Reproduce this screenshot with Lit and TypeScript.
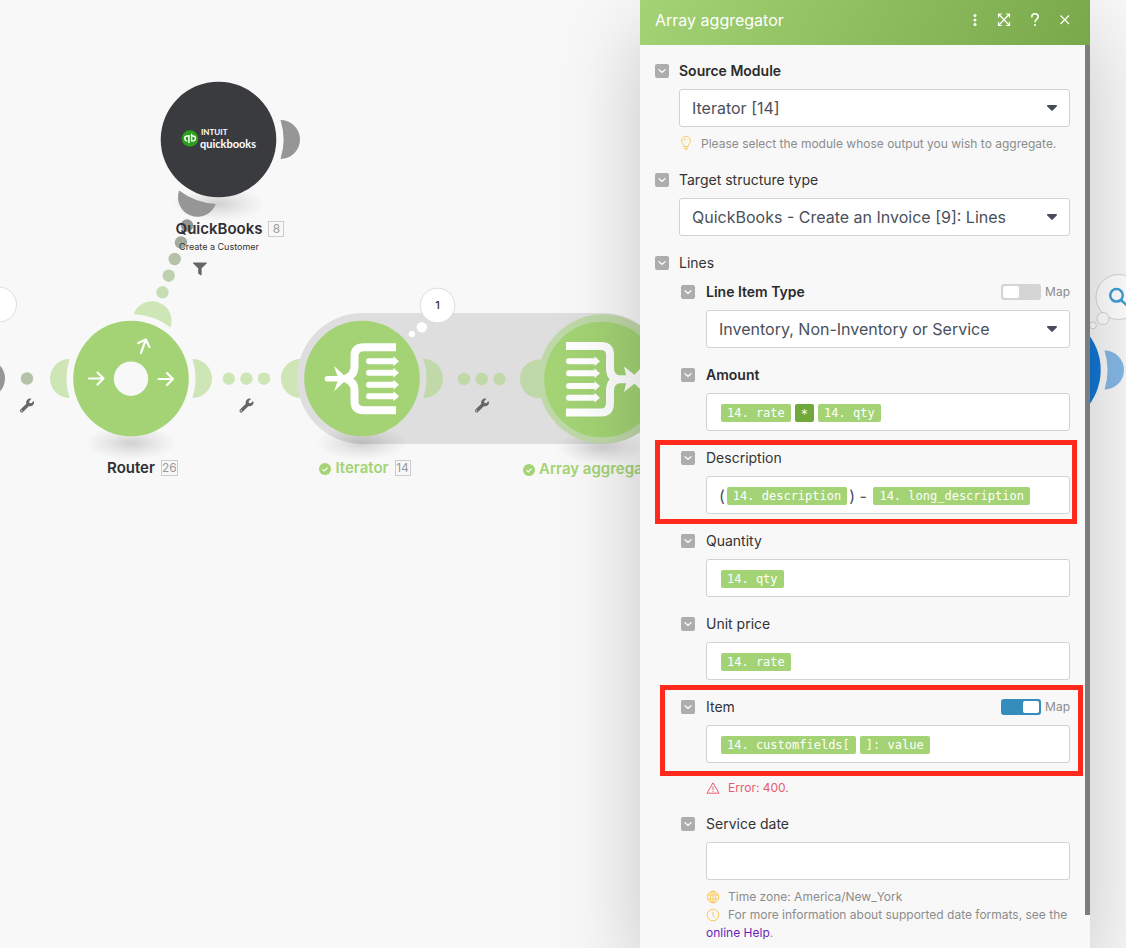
import { LitElement, html, svg, css, nothing } from "lit";
import { customElement, property } from "lit/decorators.js";

const EAR = "M61.5 -19.5A19.5 19.5 0 0 1 61.5 19.5A64.5 64.5 0 0 0 61.5 -19.5Z";
const WRENCH =
  "M507.73 109.1c-2.24-9.03-13.54-12.09-20.12-5.51l-74.36 74.36-67.88-11.31-11.31-67.88 74.36-74.36c6.62-6.62 3.43-17.9-5.66-20.16-47.38-11.74-99.55.91-136.58 37.93-39.64 39.64-50.55 97.1-34.05 147.2L18.74 402.76c-24.99 24.99-24.99 65.51 0 90.5 24.99 24.99 65.51 24.99 90.5 0l213.21-213.21c50.12 16.71 107.47 5.68 147.37-34.22 37.07-37.07 49.7-89.32 37.91-136.73zM64 472c-13.25 0-24-10.75-24-24 0-13.26 10.75-24 24-24s24 10.74 24 24c0 13.25-10.75 24-24 24z";
const FILTER =
  "M487.976 0H24.028C2.71 0-8.047 25.866 7.058 40.971L192 225.941V432c0 7.831 3.821 15.17 10.237 19.662l80 55.98C298.02 518.69 320 507.493 320 487.98V225.941l184.947-184.97C520.021 25.896 509.338 0 487.976 0z";

const ear = (x: number, y: number, angle: number, cls: string) =>
  svg`<path class=${cls} d=${EAR} transform="translate(${x} ${y}) rotate(${angle})"/>`;
const wrench = (x: number, y: number) =>
  svg`<path class="tool" d=${WRENCH} transform="translate(${x} ${y}) scale(.0273)"/>`;
const dots = (xs: number[], y: number) =>
  xs.map((x) => svg`<circle class="soft" cx=${x} cy=${y} r="6.2"/>`);
const slimArrow = (x: number, y: number, angle: number) =>
  svg`<path class="arrow" d="M-7.5 0H7M1 -6L7 0L1 6" transform="translate(${x} ${y}) rotate(${angle})"/>`;

interface NodeLabel {
  x: number;
  y: number;
  title: string;
  id: string;
  subtitle?: string;
  done?: boolean;
}

const LABELS: NodeLabel[] = [
  { x: 219, y: 219, title: "QuickBooks", id: "8", subtitle: "Create a Customer" },
  { x: 131, y: 458, title: "Router", id: "26" },
  { x: 362, y: 458, title: "Iterator", id: "14", done: true },
  { x: 601, y: 459, title: "Array aggregator", id: "15", done: true },
];

@customElement("scenario-canvas")
class ScenarioCanvas extends LitElement {
  static styles = css`
    :host { display: block; position: relative; overflow: hidden; background: #f8f8f8; }
    .drawing { display: block; width: 100%; height: 100%; }
    .green { fill: #a3d374; }
    .soft { fill: #a3d374; opacity: .5; }
    .ring { fill: #bfd8a8; }
    .gray { fill: #969696; }
    .blue { fill: #1277d3; }
    .softblue { fill: #1277d3; opacity: .5; }
    .tool { fill: #666; }
    .arrow { fill: none; stroke: #fff; stroke-width: 2.2; stroke-linecap: round; stroke-linejoin: round; }
    .white { fill: #fff; }
    .brace { fill: none; stroke: #fff; stroke-width: 8; }
    .bubble { fill: #fff; stroke: #ddd; }
    .count { font: 500 11px Inter, sans-serif; fill: #333; text-anchor: middle; }
    .intuit { font: 700 8px Lato, sans-serif; fill: #fff; }
    .brand { font: 700 11px Lato, sans-serif; fill: #fff; }
    .label { position: absolute; width: 300px; display: grid; grid-template-columns: 1fr auto 1fr; column-gap: 6px; align-items: center; font-family: Inter, sans-serif; }
    .title { grid-column: 2; font-size: 15px; line-height: 20px; font-weight: 600; color: #2f2f33; }
    .done { column-gap: 4px; }
    .done .title { color: #a3d374; }
    .check { justify-self: end; width: 12px; height: 12px; margin-top: 2px; }
    .id { grid-column: 3; justify-self: start; box-sizing: border-box; min-width: 16px; height: 16px; border: 1px solid #ccc; font-size: 12px; line-height: 14px; text-align: center; color: #999; }
    .done .id { margin-left: 2px; }
    .subtitle { grid-column: 1 / 4; text-align: center; font-size: 9px; line-height: 16px; color: #333; }
  `;

  render() {
    return html`
      <svg class="drawing" aria-hidden="true">
        <defs>
          <radialGradient id="ground"><stop offset="0" stop-color="#000" stop-opacity=".16"/><stop offset=".5" stop-color="#000" stop-opacity=".07"/><stop offset="1" stop-color="#000" stop-opacity="0"/></radialGradient>
        </defs>
        ${svg`
        <ellipse cx="218" cy="204" rx="46" ry="17" fill="url(#ground)"/>
        <ellipse cx="131" cy="443" rx="46" ry="17" fill="url(#ground)"/>

        <circle class="gray" cx="-14.5" cy="378.5" r="19.5"/>
        <circle class="bubble" cx="-1" cy="304.5" r="17.5"/>
        <circle cx="27" cy="378.5" r="6.2" fill="#b4c2a9"/>
        ${wrench(20, 398.5)}

        ${ear(219, 139.5, 0, "gray")}
        ${ear(218.5, 139.5, 110, "gray")}
        <circle cx="218.5" cy="139.5" r="57.8" fill="#3a3b3f"/>
        <circle cx="190" cy="138.5" r="8.3" fill="#2ca01c"/>
        <g fill="none" stroke="#fff" stroke-width="1.4">
          <path d="M189 142.2V136H187.2A2.3 2.3 0 0 0 187.2 140.9M188.9 135V143"/>
          <path d="M191.6 133.8V140.9H193A2.4 2.4 0 0 0 193 136H192.4"/>
        </g>
        <text class="intuit" x="201" y="135">INTUIT</text>
        <text class="brand" x="200" y="148">quickbooks</text>
        <circle cx="187" cy="225.5" r="6.2" fill="#929591"/>
        <circle cx="181" cy="242.5" r="6.2" fill="#a1aa9b"/>
        <circle cx="174.7" cy="259" r="6.2" fill="#b3c2a8"/>
        <circle cx="168.7" cy="275.7" r="6.2" fill="#bed0ae"/>
        <circle cx="162.5" cy="292.3" r="6.2" fill="#c7ddb4"/>
        <path class="tool" d=${FILTER} transform="translate(193 262.5) scale(.027 .025)"/>

        ${ear(131, 378.5, 180, "soft")}
        ${ear(131, 378.5, 0, "soft")}
        ${ear(131, 378.5, -70, "soft")}
        <circle class="green" cx="131" cy="378.5" r="57.8"/>
        <circle cx="131" cy="378.7" r="17.2" fill="#f8f8f8"/>
        ${slimArrow(96.5, 378.5, 0)}
        ${slimArrow(166, 379, 0)}
        ${slimArrow(143.5, 346, -70)}
        ${dots([228.8, 246.4, 264], 378.7)}
        ${wrench(239.5, 398.5)}

        ${ear(362, 378.5, 180, "soft")}
        <rect x="297" y="313" width="371" height="131" rx="65.5" fill="#dedede"/>
        <ellipse cx="362" cy="443" rx="46" ry="17" fill="url(#ground)"/>
        ${ear(362, 378.5, 0, "soft")}
        <circle class="green" cx="362" cy="378.5" r="57.8"/>
        <path class="brace" d="M396 347.3H364Q354.5 347.3 354.5 356V367Q354.5 375 346 378.5Q354.5 382 354.5 390V401.5Q354.5 410.3 364 410.3H396"/>
        <path class="white" d="M327.5 375.9H337.5L334 366L347.5 378.5L334 391.5L337.5 381.6H327.5A2.8 2.8 0 0 1 327.5 375.9Z"/>
        ${[361.3, 372.8, 384.7, 396.2].map(
          (y) => svg`<path class="white" transform="translate(366 ${y})" d="M3 -3H27.5V-5L33 0L27.5 5V3H3A3 3 0 0 1 3 -3Z"/>`,
        )}
        <circle class="bubble" cx="437.5" cy="305.5" r="17.3"/>
        <circle class="white" cx="421.8" cy="327.3" r="5.3"/>
        <circle class="white" cx="411.8" cy="334" r="3.2"/>
        <text class="count" x="437.5" y="309">1</text>

        ${dots([464, 481.7, 499.5], 379)}
        ${wrench(475, 398.5)}
        <ellipse cx="602" cy="447" rx="46" ry="17" fill="url(#ground)"/>
        <circle class="ring" cx="539.5" cy="379" r="19.5"/>
        <circle class="ring" cx="603" cy="379" r="64.7"/>
        <circle class="green" cx="602" cy="379.5" r="57.8"/>
        <path class="brace" d="M566 346H601Q610 346 610 355V368Q610 379 620 379.3H628M566 412.5H601Q610 412.5 610 403V391Q610 379.8 620 379.3"/>
        <path class="white" d="M624 366.5L640 379.3L624 392L627 379.3Z"/>
        <path class="white" d="M630 379.3L642 367V391Z"/>
        ${[361.3, 373.3, 386, 397.8].map(
          (y) => svg`<path class="white" transform="translate(566 ${y})" d="M3 -3H28.5V-5L34 0L28.5 5V3H3A3 3 0 0 1 3 -3Z"/>`,
        )}

        ${ear(1043, 370, 0, "softblue")}
        <circle class="blue" cx="1042.7" cy="370" r="58"/>
        <circle cx="1118.5" cy="297" r="22.5" fill="#fff" stroke="#d4d4d4"/>
        <circle cx="1103" cy="318.5" r="6" fill="#fff" stroke="#d4d4d4"/>
        <circle cx="1093" cy="325.3" r="3.4" fill="#fff" stroke="#d4d4d4"/>
        <g fill="none" stroke="#3f9fd6" stroke-width="2.5"><circle cx="1116.5" cy="295.3" r="6.3"/><path d="M1121 300L1128 306.5"/></g>
        `}
      </svg>
      ${LABELS.map(
        (n) => html`
          <div class="label ${n.done ? "done" : ""}" style="left:${n.x - 150}px;top:${n.y}px">
            ${n.done
              ? html`<svg class="check" viewBox="0 0 12 12" aria-hidden="true"><circle class="green" cx="6" cy="6" r="6" /><path d="M3.5 6.2L5.3 8L8.6 4.6" fill="none" stroke="#fff" stroke-width="1.2" /></svg>`
              : nothing}
            <span class="title">${n.title}</span>
            <span class="id">${n.id}</span>
            ${n.subtitle ? html`<span class="subtitle">${n.subtitle}</span>` : nothing}
          </div>
        `,
      )}
    `;
  }
}

interface Field {
  key: string;
  label: string;
  kind: "select" | "editor" | "date";
  required?: boolean;
  value?: string;
  parts?: { text: string; type: "text" | "chip" | "op" }[];
  map?: "on" | "off";
  mark?: string;
  error?: string;
  tip?: string;
}

const TOP_FIELDS: Field[] = [
  { key: "source", label: "Source Module", kind: "select", required: true, value: "Iterator [14]", tip: "Please select the module whose output you wish to aggregate." },
  { key: "target", label: "Target structure type", kind: "select", value: "QuickBooks - Create an Invoice [9]: Lines" },
];

const LINE_FIELDS: Field[] = [
  { key: "type", label: "Line Item Type", kind: "select", required: true, value: "Inventory, Non-Inventory or Service", map: "off" },
  { key: "amount", label: "Amount", kind: "editor", required: true, parts: [{ text: "14. rate", type: "chip" }, { text: "*", type: "op" }, { text: "14. qty", type: "chip" }] },
  { key: "description", label: "Description", kind: "editor", mark: "mark-a", parts: [{ text: "(", type: "text" }, { text: "14. description", type: "chip" }, { text: ") - ", type: "text" }, { text: "14. long_description", type: "chip" }] },
  { key: "quantity", label: "Quantity", kind: "editor", parts: [{ text: "14. qty", type: "chip" }] },
  { key: "price", label: "Unit price", kind: "editor", parts: [{ text: "14. rate", type: "chip" }] },
  { key: "item", label: "Item", kind: "editor", map: "on", mark: "mark-b", parts: [{ text: "14. customfields[", type: "chip" }, { text: "]: value", type: "chip" }], error: "Error: 400." },
  { key: "date", label: "Service date", kind: "date" },
];

@customElement("module-field")
class ModuleField extends LitElement {
  @property({ attribute: false }) field!: Field;

  static styles = css`
    :host { display: block; font-family: Inter, sans-serif; }
    .group { position: relative; display: grid; grid-template-columns: 14px minmax(0, 1fr); column-gap: var(--field-gap, 10px); row-gap: 8px; }
    .toggle { align-self: center; width: 14px; height: 14px; padding: 0; border: 0; border-radius: 2px; background: #adadad; display: grid; place-items: center; }
    .toggle svg { width: 14px; height: 14px; }
    .head { display: flex; justify-content: space-between; align-items: center; height: 20px; }
    .name { font-size: 14px; line-height: 20px; color: #333; }
    .required { font-weight: 600; color: #2b2b2b; }
    .map { display: flex; align-items: center; gap: 4px; font-size: 12px; line-height: 20px; color: #8c8c8c; }
    .switch { appearance: none; box-sizing: border-box; width: 40px; height: 16px; margin: 0; padding: 2px; border-radius: 3px; background: #d5d5d5; display: flex; }
    .switch::before { content: ""; width: 16px; height: 12px; border-radius: 2px; background: #fff; }
    .switch:checked { background: #348dbb; justify-content: flex-end; }
    .box { grid-column: 2; box-sizing: border-box; width: 100%; min-height: 38px; margin: 0; border: 1px solid #d2d2d2; border-radius: 3px; background: #fff; padding: 0 12px; font: 16px/24px Inter, sans-serif; color: #4a505b; }
    .picker { grid-column: 2; display: grid; align-items: center; }
    .picker > * { grid-area: 1 / 1; }
    .picker .box { appearance: none; height: 38px; padding-right: 36px; }
    .caret { justify-self: end; width: 12px; height: 8px; margin-right: 12px; pointer-events: none; }
    .editor { display: flex; align-items: center; flex-wrap: wrap; white-space: pre; outline: none; padding-top: 2px; }
    .chip, .op { margin: 0 2px; padding: 0 6px; border-radius: 2px; background: #a3d374; color: #fff; font: 12px/18px "DejaVu Sans Mono", monospace; }
    .op { padding-top: 3px; line-height: 15px; background: #71a83c; }
    .mark { position: absolute; border: 5px solid #ff2a1c; pointer-events: none; }
    .mark-a { inset: -8px -7px -10px -26px; }
    .mark-b { inset: -12px -13px -13px -21px; }
    .note { display: flex; align-items: center; margin: 8px 0 0 calc(14px + var(--field-gap, 10px)); font-size: 12px; line-height: 18px; color: #8c8c8c; gap: 8px; }
    .note svg { flex: none; width: 14px; height: 16px; }
    .error { margin-top: 16px; color: #e65c6f; }
  `;

  private control(f: Field) {
    if (f.kind === "select")
      return html`<div class="picker">
        <select class="box" id="control"><option>${f.value}</option></select>
        <svg class="caret" viewBox="0 0 12 8" aria-hidden="true"><path d="M1.8 1H10.2C11 1 11.3 1.9 10.7 2.5L6.7 6.5Q6 7.1 5.3 6.5L1.3 2.5C.7 1.9 1 1 1.8 1Z" fill="#464d58" /></svg>
      </div>`;
    if (f.kind === "date") return html`<input class="box" id="control" type="text" />`;
    return html`<div class="box editor" id="control" role="textbox" tabindex="0" aria-labelledby="name">${f.parts!.map((p) =>
      p.type === "text" ? html`<span>${p.text}</span>` : html`<span class=${p.type}>${p.text}</span>`)}</div>`;
  }

  render() {
    const f = this.field;
    return html`
      <div class="group">
        <button class="toggle" type="button" aria-label="Collapse ${f.label}">
          <svg viewBox="0 0 14 14" aria-hidden="true"><path d="M4 5.8L7 8.4L10 5.8" fill="none" stroke="#fff" stroke-width="1.3" stroke-linecap="round" /></svg>
        </button>
        <div class="head">
          <label id="name" class="name ${f.required ? "required" : ""}" for="control">${f.label}</label>
          ${f.map ? html`<label class="map"><input class="switch" type="checkbox" ?checked=${f.map === "on"} />Map</label>` : nothing}
        </div>
        ${this.control(f)}
        ${f.mark ? html`<div class="mark ${f.mark}"></div>` : nothing}
      </div>
      ${f.tip
        ? html`<div class="note"><svg viewBox="0 0 14 16" aria-hidden="true" fill="none" stroke="#fbc95c"><path d="M5 10.5C5 8 2.5 7.300 2.5 4.800A4.500 4.500 0 0 1 11.500 4.800C11.500 7.300 9 8 9 10.500ZM5 12.200H9M6 13.700H8M5 4.800A2 2 0 0 1 7 2.800" /></svg><span>${f.tip}</span></div>`
        : nothing}
      ${f.error
        ? html`<div class="note error"><svg viewBox="0 0 14 16" aria-hidden="true" fill="none" stroke="currentColor" stroke-linejoin="round"><path d="M7 2.800L13 13.200H1ZM7 6.500V10M7 11V12" /></svg><span>${f.error}</span></div>`
        : nothing}
    `;
  }
}

@customElement("app-root")
class AppRoot extends LitElement {
  static styles = css`
    :host { display: grid; grid-template: minmax(0, 1fr) / minmax(0, 1fr); height: 100vh; overflow: hidden; font-family: Inter, sans-serif; }
    .canvas, .panel { grid-area: 1 / 1; }
    .panel { z-index: 1; justify-self: end; box-sizing: border-box; width: min(450px, 100%); margin-right: 36px; display: flex; flex-direction: column; background: #f8f8f8; box-shadow: 0 30px 80px rgba(0, 0, 0, .2); }
    .bar { flex: none; display: flex; align-items: center; justify-content: space-between; height: 45px; padding: 0 16px 6px 15px; box-sizing: border-box; background: linear-gradient(120deg, #a3d374, #78a849); }
    .heading { margin: 0; font-size: 16px; line-height: 24px; font-weight: 400; color: #fff; }
    .actions { display: flex; gap: 12px; }
    .action { width: 18px; height: 18px; padding: 0; border: 0; background: none; color: #fff; }
    .action svg { display: block; width: 18px; height: 18px; fill: none; stroke: currentColor; stroke-width: 1.2; }
    .main { flex: 1; min-height: 0; display: flex; }
    .form { flex: 1; min-width: 0; overflow-y: auto; scrollbar-width: none; box-sizing: border-box; padding: 16px 15px 6px; display: flex; flex-direction: column; gap: 17px; }
    .rail { width: 5px; }
    .thumb { height: 96.3%; background: #7d7d7d; }
    .section { display: flex; align-items: center; gap: 10px; height: 20px; margin: 0; font-size: 14px; line-height: 20px; font-weight: 400; color: #333; }
    .toggle { width: 14px; height: 14px; padding: 0; border: 0; border-radius: 2px; background: #adadad; }
    .toggle svg { display: block; width: 14px; height: 14px; }
    .lines { --field-gap: 11px; display: flex; flex-direction: column; gap: 17px; margin: -8px 0 0 26px; }
    .info { margin: -9px 0 0 51px; font-size: 12px; line-height: 18px; color: #8c8c8c; }
    .line { display: block; }
    .line svg { width: 14px; height: 14px; margin-right: 8px; vertical-align: -3px; fill: none; stroke: #fbc95c; }
    .help { color: #6a1fb8; text-decoration: none; }
  `;

  render() {
    return html`
      <scenario-canvas class="canvas"></scenario-canvas>
      <section class="panel">
        <header class="bar">
          <h1 class="heading">Array aggregator</h1>
          <div class="actions">
            <button class="action" aria-label="More"><svg viewBox="0 0 18 18"><g fill="currentColor" stroke="none"><circle cx="9" cy="4.5" r="1.5" /><circle cx="9" cy="9" r="1.5" /><circle cx="9" cy="13.5" r="1.5" /></g></svg></button>
            <button class="action" aria-label="Expand"><svg viewBox="0 0 18 18"><path d="M2.5 6.500V3H6M10 3H13.500V6.500M13.500 11V14.500H10M6 14.500H2.500V11M2.500 3L13.500 14.500M13.500 3L2.500 14.500" /></svg></button>
            <button class="action" aria-label="Help"><svg viewBox="0 0 18 18"><path d="M5.8 6.5V5.800A3.200 3 0 0 1 12.200 5.800C12.200 8.300 9 8 9 11.300" stroke-width="1.500" /><circle cx="9" cy="14" r="1.100" fill="currentColor" stroke="none" /></svg></button>
            <button class="action" aria-label="Close"><svg viewBox="0 0 18 18"><path d="M4.5 4.500L13 13M13 4.500L4.500 13" /></svg></button>
          </div>
        </header>
        <div class="main">
          <form class="form">
            ${TOP_FIELDS.map((f) => html`<module-field .field=${f}></module-field>`)}
            <h2 class="section">
              <button class="toggle" type="button" aria-label="Collapse Lines"><svg viewBox="0 0 14 14"><path d="M4 5.8L7 8.4L10 5.8" fill="none" stroke="#fff" stroke-width="1.3" stroke-linecap="round" /></svg></button>
              <span>Lines</span>
            </h2>
            <div class="lines">${LINE_FIELDS.map((f) => html`<module-field .field=${f}></module-field>`)}</div>
            <div class="info">
              <span class="line"><svg viewBox="0 0 14 14"><circle cx="7" cy="7" r="5.8" /><ellipse cx="7" cy="7" rx="2.7" ry="5.8" /><path d="M1.5 5H12.5M1.5 9H12.5M7 1V13" /></svg>Time zone: America/New_York</span>
              <span class="line"><svg viewBox="0 0 14 14"><circle cx="7" cy="7" r="5.8" /><path d="M7 3.5V7L9 9.5" /></svg>For more information about supported date formats, see the <a class="help" href="#help">online Help</a>.</span>
            </div>
          </form>
          <div class="rail"><div class="thumb"></div></div>
        </div>
      </section>
    `;
  }
}
